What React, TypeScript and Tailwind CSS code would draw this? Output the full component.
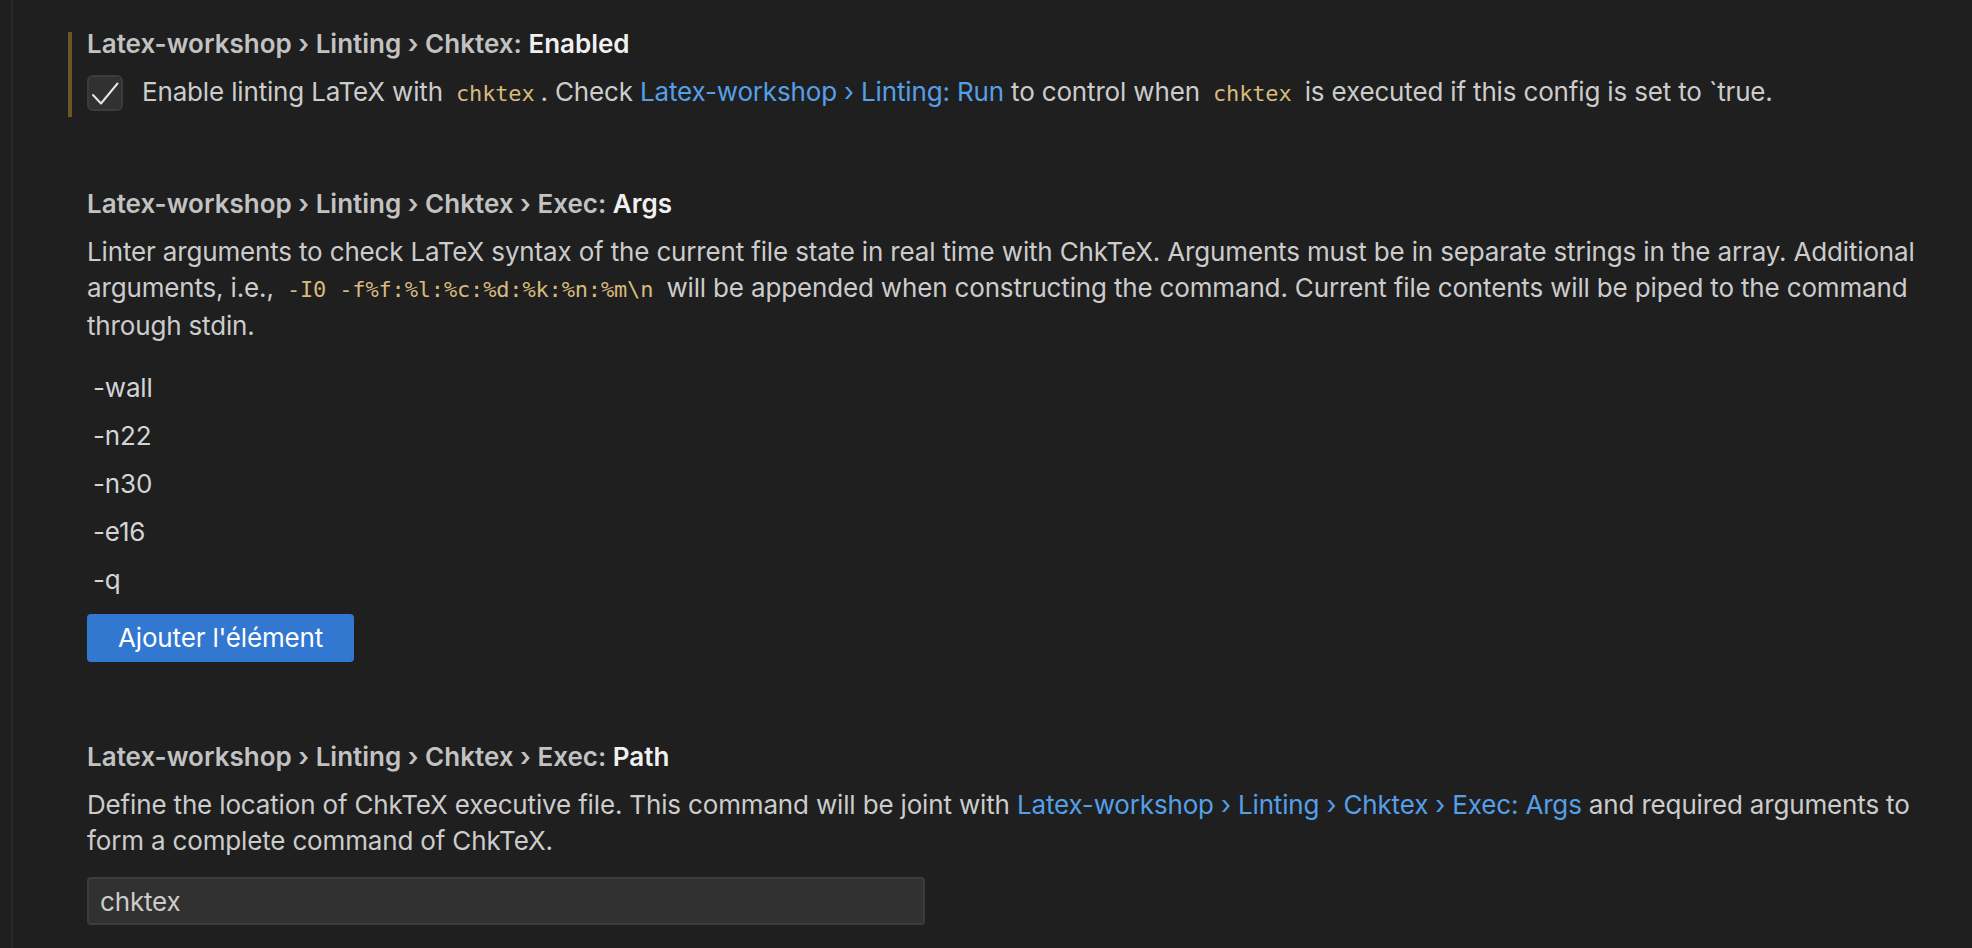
const font = { fontFamily: 'Inter, "Noto Sans", sans-serif' };

const Code: React.FC<{ children: React.ReactNode }> = ({ children }) => (
  <code className="px-[6px] text-[22px] text-[#d7ba7d] font-['DejaVu_Sans_Mono',monospace]">{children}</code>
);

const Link: React.FC<{ children: React.ReactNode }> = ({ children }) => (
  <span className="text-[#559fe8]">{children}</span>
);

const Title: React.FC<{ category: string; label: string }> = ({ category, label }) => (
  <div className="h-[24px] leading-[24px] text-[26px] font-semibold whitespace-nowrap tracking-normal">
    <span className="text-[#c2c2c2]">{category}</span>
    <span className="text-[#f0f0f0]">{label}</span>
  </div>
);

const args = ["-wall", "-n22", "-n30", "-e16", "-q"];

export default function App() {
  return (
    <div className="w-full h-[948px] bg-[#1f1f1f] overflow-hidden pl-[11px]" style={font}>
      <div className="h-full border-l-[2px] border-[#2a2a2a] pl-[55px] pt-[32px] text-[#cccccc] tracking-[-0.01em]">
        {/* Chktex: Enabled */}
        <div className="border-l-[4px] border-[#6b5425] pl-[15px] pb-[6px]">
          <Title category="Latex-workshop › Linting › Chktex: " label="Enabled" />
          <div className="mt-[19px] flex items-center gap-[19px] h-[36px]">
            <div className="w-[36px] h-[36px] shrink-0 rounded-[6px] bg-[#313131] border-[2px] border-[#3c3c3c] flex items-center justify-center">
              <svg width="36" height="36" viewBox="0 0 36 36" className="-m-[2px]">
                <polyline points="6,20 14,28.5 30.5,8.5" fill="none" stroke="#e6e6e6" strokeWidth="2" strokeLinecap="round" strokeLinejoin="round" />
              </svg>
            </div>
            <p className="text-[26px] leading-[36px] whitespace-nowrap">
              Enable linting LaTeX with <Code>chktex</Code>. Check <Link>Latex-workshop › Linting: Run</Link> to control when <Code>chktex</Code> is executed if this config is set to `true.
            </p>
          </div>
        </div>

        {/* Chktex > Exec: Args */}
        <div className="pl-[19px] mt-[75px]">
          <Title category="Latex-workshop › Linting › Chktex › Exec: " label="Args" />
          <p className="mt-[18px] text-[26px] leading-[36px] whitespace-nowrap">
            Linter arguments to check LaTeX syntax of the current file state in real time with ChkTeX. Arguments must be in separate strings in the array. Additional
            <br />
            arguments, i.e., <Code>-I0 -f%f:%l:%c:%d:%k:%n:%m\n</Code> will be appended when constructing the command. Current file contents will be piped to the command
            <br />
            through stdin.
          </p>
          <ul className="mt-[20px]">
            {args.map((a) => (
              <li key={a} className="h-[48px] leading-[48px] pl-[6px] text-[26px] text-[#d4d4d4]">
                {a}
              </li>
            ))}
          </ul>
          <button className="mt-[10px] h-[48px] px-[31px] rounded-[4px] bg-[#3277d0] text-white text-[26px] leading-[48px]">
            Ajouter l'élément
          </button>
        </div>

        {/* Chktex > Exec: Path */}
        <div className="pl-[19px] mt-[83px]">
          <Title category="Latex-workshop › Linting › Chktex › Exec: " label="Path" />
          <p className="mt-[18px] text-[26px] leading-[36px] whitespace-nowrap">
            Define the location of ChkTeX executive file. This command will be joint with <Link>Latex-workshop › Linting › Chktex › Exec: Args</Link> and required arguments to
            <br />
            form a complete command of ChkTeX.
          </p>
          <div className="mt-[18px] w-[838px] h-[48px] rounded-[4px] bg-[#313131] border-[2px] border-[#3c3c3c] px-[11px] flex items-center text-[26px] text-[#cccccc]">
            chktex
          </div>
        </div>
      </div>
    </div>
  );
}
